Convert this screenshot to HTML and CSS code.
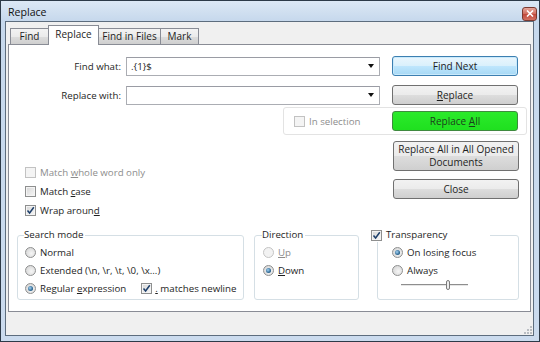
FILE: index.html
```html
<!DOCTYPE html>
<html lang="en">
<head>
    <meta charset="UTF-8">
    <title>Replace</title>
    <link rel="stylesheet" href="styles.css">
</head>
<body>
    <div class="window">
        <div class="titlebar">
            <span class="title">Replace</span>
            <span class="close">
                <svg width="8" height="7" viewBox="0 0 8 7">
                    <path d="M1 0.5 L7 6.5 M7 0.5 L1 6.5" stroke="#fff" stroke-width="1.6"/>
                </svg>
            </span>
        </div>

        <div class="client">
            <!-- Tab strip -->
            <div class="tabs">
                <div class="tab tab-find">Find</div>
                <div class="tab tab-replace active">Replace</div>
                <div class="tab tab-files">Find in Files</div>
                <div class="tab tab-mark">Mark</div>
            </div>

            <div class="panel">
                <div class="row">
                    <label class="field-label">Find what:</label>
                    <div class="combo"><span class="combo-text">.{1}$</span><span class="arrow"></span></div>
                    <button class="btn btn-default">Find Next</button>
                </div>
                <div class="row row-second">
                    <label class="field-label">Replace with:</label>
                    <div class="combo"><span class="combo-text"></span><span class="arrow"></span></div>
                    <button class="btn"><u>R</u>eplace</button>
                </div>

                <!-- In selection box with Replace All -->
                <div class="selection-box">
                    <span class="option disabled"><span class="check"></span><span>In selection</span></span>
                    <button class="btn btn-green">Replace <u>A</u>ll</button>
                </div>

                <div class="lower">
                    <div class="checks">
                        <div class="option disabled"><span class="check"></span><span>Match <u>w</u>hole word only</span></div>
                        <div class="option"><span class="check"></span><span>Match <u>c</u>ase</span></div>
                        <div class="option"><span class="check checked"><svg width="9" height="9" viewBox="0 0 9 9"><path d="M1.5 4.5 L3.6 7 L7.8 1.2" fill="none" stroke="#1d3f6b" stroke-width="1.5"/></svg></span><span>Wrap aroun<u>d</u></span></div>
                    </div>
                    <div class="buttons">
                        <button class="btn btn-tall">Replace All in All Opened<br>Documents</button>
                        <button class="btn">Close</button>
                    </div>
                </div>

                <!-- Group boxes -->
                <div class="groups">
                    <fieldset class="group group-mode">
                        <legend>Search mode</legend>
                        <div class="option"><span class="radio"></span><span>Normal</span></div>
                        <div class="option"><span class="radio"></span><span>Extended (\n, \r, \t, \0, \x...)</span></div>
                        <div class="option">
                            <span class="radio on"></span><span>Regular <u>e</u>xpression</span>
                            <span class="newline"><span class="check checked"><svg width="9" height="9" viewBox="0 0 9 9"><path d="M1.5 4.5 L3.6 7 L7.8 1.2" fill="none" stroke="#1d3f6b" stroke-width="1.5"/></svg></span><span><u>.</u> matches newline</span></span>
                        </div>
                    </fieldset>

                    <fieldset class="group group-dir">
                        <legend>Direction</legend>
                        <div class="option disabled"><span class="radio"></span><span><u>U</u>p</span></div>
                        <div class="option"><span class="radio on"></span><span><u>D</u>own</span></div>
                    </fieldset>

                    <fieldset class="group group-trans">
                        <legend><span class="check checked"><svg width="9" height="9" viewBox="0 0 9 9"><path d="M1.5 4.5 L3.6 7 L7.8 1.2" fill="none" stroke="#1d3f6b" stroke-width="1.5"/></svg></span><span>Transparency</span></legend>
                        <div class="option"><span class="radio on"></span><span>On losing focus</span></div>
                        <div class="option"><span class="radio"></span><span>Always</span></div>
                        <div class="slider">
                            <span class="track track-left"></span>
                            <span class="thumb"></span>
                            <span class="track track-right"></span>
                        </div>
                    </fieldset>
                </div>
            </div>

            <div class="footer">
                <svg class="grip" width="8" height="8" viewBox="0 0 8 8">
                    <rect x="6" y="0" width="2" height="2" fill="#b9bdc2"/>
                    <rect x="3" y="3" width="2" height="2" fill="#b9bdc2"/>
                    <rect x="6" y="3" width="2" height="2" fill="#b9bdc2"/>
                    <rect x="0" y="6" width="2" height="2" fill="#b9bdc2"/>
                    <rect x="3" y="6" width="2" height="2" fill="#b9bdc2"/>
                    <rect x="6" y="6" width="2" height="2" fill="#b9bdc2"/>
                </svg>
            </div>
        </div>
    </div>
</body>
</html>
```

FILE: styles.css
```css
/* Page and window frame */
body {
    margin: 0;
    font-family: 'Open Sans', 'Noto Sans', sans-serif;
    font-size: 9.7px;
    color: #1e1e1e;
    background: #ffffff;
}

.window {
    width: 540px;
    height: 342px;
    box-sizing: border-box;
    border: 1px solid #2d3a48;
    background: linear-gradient(#dce8f5, #c6d8ec 20px, #cbdbee);
    padding: 0 5px 5px 4px;
    display: flex;
    flex-direction: column;
}

.titlebar {
    height: 20px;
    display: flex;
    align-items: center;
    justify-content: space-between;
    padding-left: 3px;
}

.title {
    font-size: 10.6px;
    color: #111;
    margin-top: 2px;
}

.close {
    width: 15px;
    height: 14px;
    margin-top: 5px;
    margin-right: -3px;
    box-sizing: border-box;
    border: 1px solid #7c3a31;
    border-radius: 3px;
    background: linear-gradient(#e6a79c, #cf6a5b 50%, #c0473a 51%, #d27162);
    display: flex;
    align-items: center;
    justify-content: center;
}

.close svg {
    display: block;
}

.client {
    flex: 1;
    border: 1px solid #5d6d7e;
    background: #f0f0f0;
    display: flex;
    flex-direction: column;
}

/* Tabs */
.tabs {
    height: 19px;
    margin-top: 3px;
    padding-left: 4px;
    display: flex;
    align-items: flex-end;
}

.tab {
    height: 16px;
    line-height: 15px;
    box-sizing: border-box;
    border: 1px solid #898c95;
    border-bottom: none;
    margin-right: -1px;
    background: linear-gradient(#f3f3f3, #ebebeb 50%, #dddddd 51%, #cfcfcf);
    text-align: center;
    font-size: 10px;
}

.tab-find { width: 39px; }
.tab-replace { width: 51px; }
.tab-files { width: 63px; }
.tab-mark { width: 39px; }

.tab.active {
    height: 20px;
    margin-bottom: -1px;
    line-height: 16px;
    background: #ffffff;
    position: relative;
    z-index: 1;
}

.panel {
    height: 268px;
    box-sizing: border-box;
    margin: 0 2px 0 2px;
    border: 1px solid #898c95;
    background: #ffffff;
    padding-top: 11px;
}

.footer {
    flex: 1;
    display: flex;
    justify-content: flex-end;
    align-items: flex-end;
    padding: 0 1px 1px 0;
}

.grip {
    display: block;
}

/* Top rows */
.row {
    height: 20px;
    display: flex;
    align-items: center;
}

.row-second {
    margin-top: 9px;
}

.field-label {
    width: 117px;
    box-sizing: border-box;
    padding-right: 5px;
    text-align: right;
}

.combo {
    width: 254px;
    height: 19px;
    box-sizing: border-box;
    border: 1px solid #abadb3;
    border-top-color: #9a9ca4;
    background: #ffffff;
    display: flex;
    align-items: center;
    justify-content: space-between;
    padding: 0 5px 0 4px;
}

.arrow {
    width: 0;
    height: 0;
    border-left: 3.5px solid transparent;
    border-right: 3.5px solid transparent;
    border-top: 4px solid #111;
}

/* Buttons */
.btn {
    width: 126px;
    height: 20px;
    margin-left: 12px;
    box-sizing: border-box;
    border: 1px solid #707070;
    border-radius: 3px;
    background: linear-gradient(#f2f2f2, #ebebeb 50%, #dddddd 51%, #cfcfcf);
    font-family: inherit;
    font-size: 10px;
    color: #1e1e1e;
    padding: 0;
}

.btn-default {
    border-color: #3c7fb1;
    background: linear-gradient(#eaf6fd, #d9f0fc 50%, #bee6fd 51%, #a7d9f5);
    box-shadow: inset 0 0 0 1px #c9eafc;
}

.btn-green {
    margin-left: 0;
    border-color: #3f8a3f;
    background: linear-gradient(#2bea2b, #1fe01f);
    color: #1b3f1b;
}

.btn-tall {
    height: 30px;
    line-height: 13px;
    padding: 0;
}

.selection-box {
    width: 244px;
    height: 28px;
    box-sizing: border-box;
    margin: 2px 0 0 274px;
    border: 1px solid #e3e3e3;
    border-radius: 3px;
    display: flex;
    align-items: center;
    justify-content: space-between;
    padding: 0 8px 0 10px;
}

/* Check boxes and radios */
.option {
    display: flex;
    align-items: center;
    height: 18px;
    white-space: nowrap;
}

.option.disabled {
    color: #8d8d8d;
}

.check {
    width: 11px;
    height: 11px;
    box-sizing: border-box;
    border: 1px solid #8e8f8f;
    background: linear-gradient(135deg, #d6d6d6, #f7f7f7);
    box-shadow: inset 0 0 0 1px #f4f4f4;
    margin-right: 4px;
    display: inline-flex;
    align-items: center;
    justify-content: center;
    flex: none;
}

.check svg {
    display: block;
}

.disabled .check {
    border-color: #c2c2c2;
    background: #f4f4f4;
}

.radio {
    width: 11px;
    height: 11px;
    box-sizing: border-box;
    border: 1px solid #8e8f8f;
    border-radius: 50%;
    background: radial-gradient(circle at 60% 60%, #f6f6f6, #cfcfcf);
    margin-right: 4px;
    display: inline-flex;
    align-items: center;
    justify-content: center;
    flex: none;
}

.radio.on::after {
    content: "";
    width: 5px;
    height: 5px;
    border-radius: 50%;
    background: radial-gradient(circle at 40% 40%, #a5d4f5, #1f5a86 70%);
}

.disabled .radio {
    border-color: #c4c4c4;
    background: #f2f2f2;
}

.lower {
    height: 79px;
    margin-top: 6px;
    display: flex;
    justify-content: space-between;
}

.checks {
    padding: 22px 0 0 16px;
}

.checks .option {
    height: 19px;
}

.buttons {
    display: flex;
    flex-direction: column;
    gap: 8px;
    margin-right: 11px;
}

.buttons .btn {
    margin-left: 0;
}

/* Group boxes */
.groups {
    display: flex;
    margin-top: 8px;
    padding-left: 8px;
}

.group {
    margin: 0;
    height: 72px;
    box-sizing: border-box;
    border: 1px solid #d5dfe5;
    border-radius: 3px;
    padding: 1px 0 0 7px;
}

.group legend {
    padding: 0 2px 0 0;
    margin-left: -1px;
    line-height: 14px;
    color: #1e1e1e;
}

.group-mode {
    width: 227px;
}

.group-dir {
    width: 105px;
    margin-left: 10px;
    padding-left: 8px;
}

.group-trans {
    width: 142px;
    margin-left: 18px;
    padding-left: 14px;
}

.group-trans legend {
    margin-left: -21px;
    width: 117px;
    display: flex;
    align-items: center;
    background: #ffffff;
}

.newline {
    display: inline-flex;
    align-items: center;
    margin-left: 15px;
}

.newline .check {
    margin-right: 3px;
}

.slider {
    display: flex;
    align-items: center;
    height: 12px;
    padding-left: 9px;
}

.track {
    height: 1px;
    background: #8e8e8e;
    border-bottom: 1px solid #e6e6e6;
}

.track-left { width: 45px; }
.track-right { width: 18px; }

.thumb {
    width: 4px;
    height: 10px;
    box-sizing: border-box;
    border: 1px solid #7b7b7b;
    border-radius: 2px;
    background: #eeeeee;
}
```
